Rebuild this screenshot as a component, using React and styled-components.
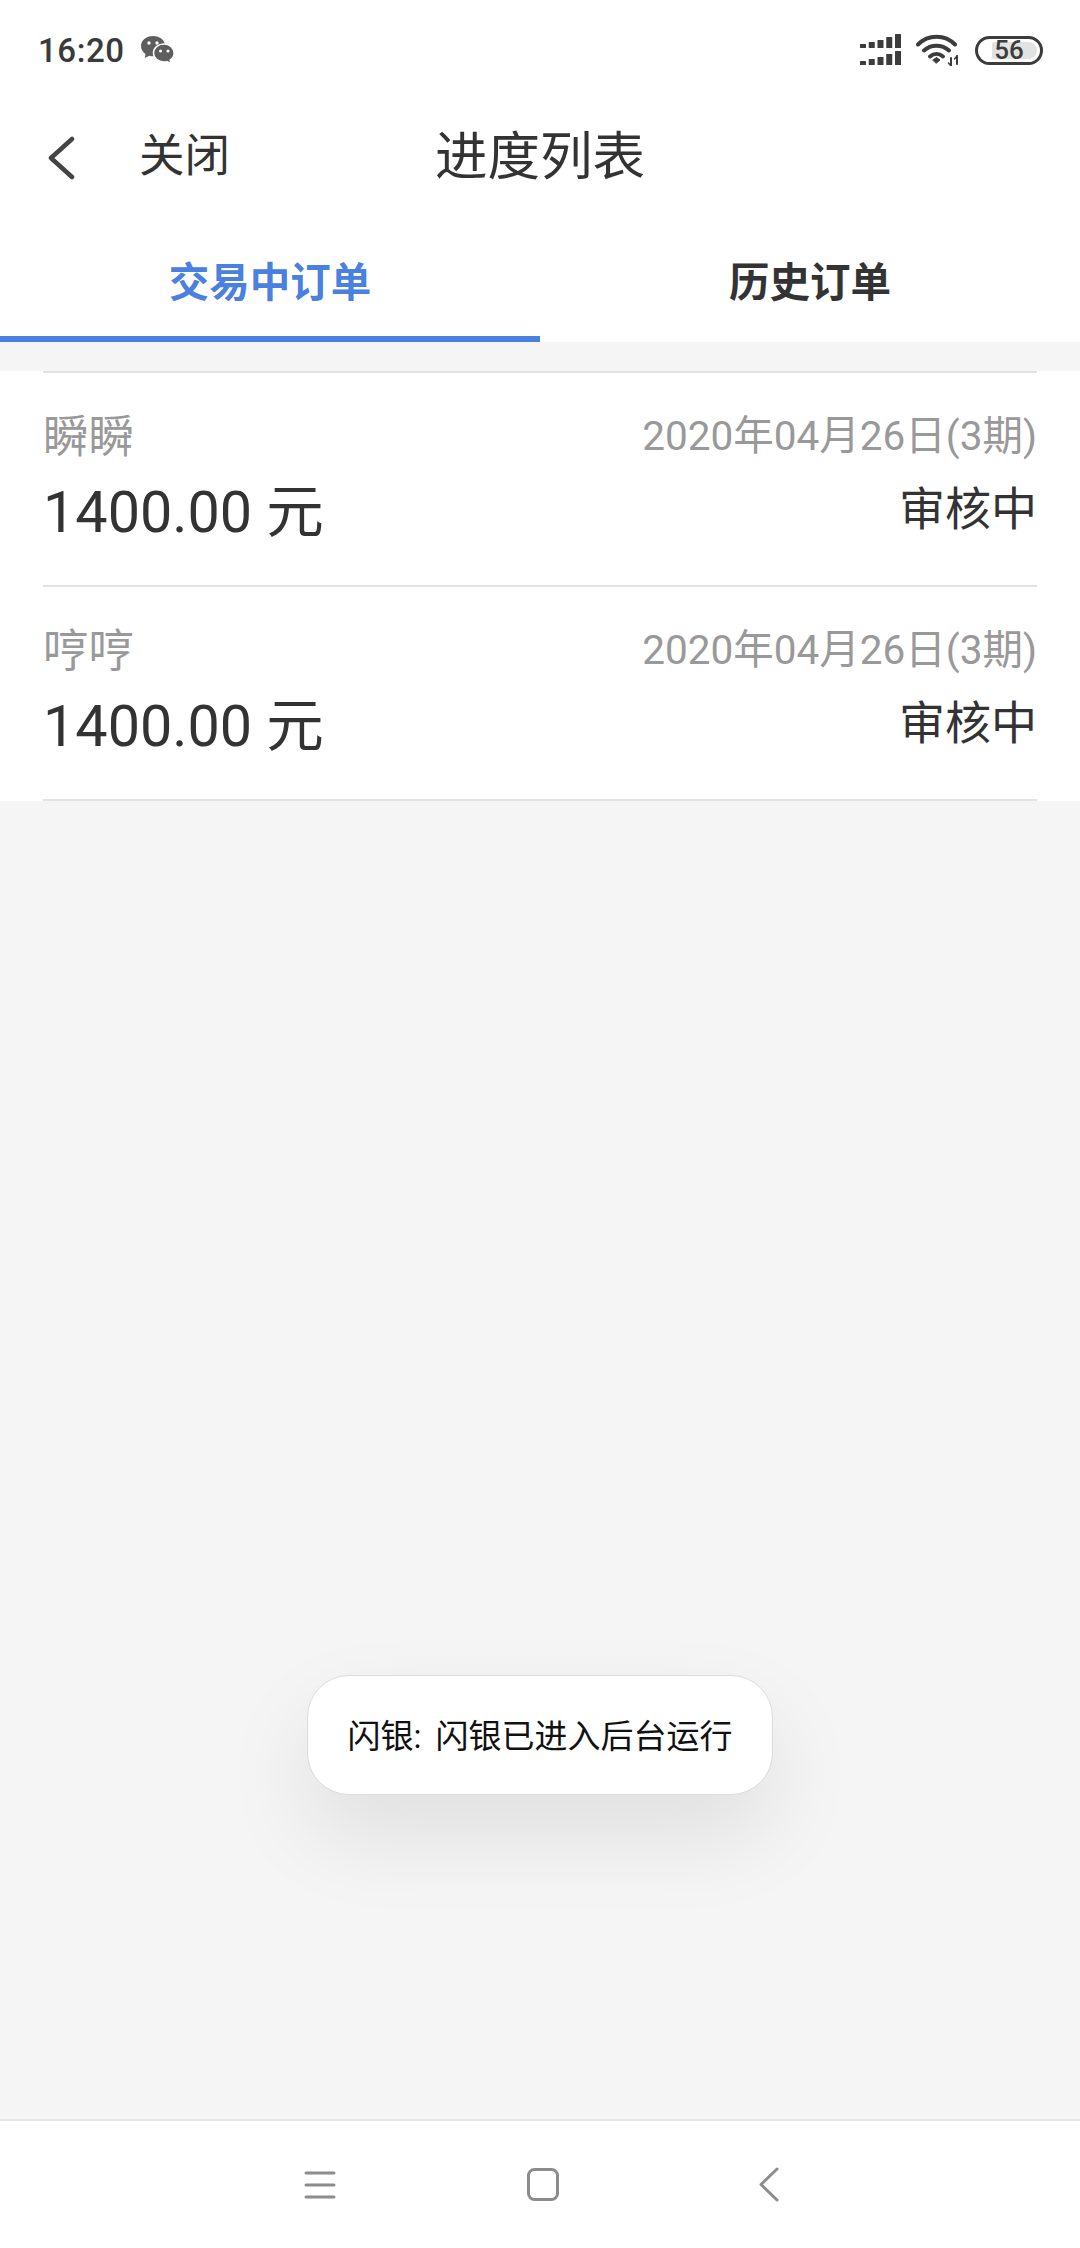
import styled, { createGlobalStyle } from 'styled-components';

const GlobalStyle = createGlobalStyle`
  html, body {
    margin: 0;
    padding: 0;
    background: #fff;
  }
  * {
    box-sizing: border-box;
  }
`;

const Page = styled.div`
  position: relative;
  width: 1080px;
  height: 2248px;
  display: flex;
  flex-direction: column;
  background: #f5f5f5;
  font-family: Roboto, "Noto Sans CJK SC", sans-serif;
  color: #333;
  overflow: hidden;
`;

const StatusBar = styled.div`
  height: 100px;
  padding: 0 37px 0 38px;
  display: flex;
  align-items: center;
  justify-content: space-between;
  background: #fff;
`;

const StatusLeft = styled.div`
  display: flex;
  align-items: center;
  gap: 15px;
`;

const Time = styled.span`
  font-size: 33px;
  font-weight: 500;
  color: #3a3a3a;
  letter-spacing: 0.6px;
`;

const StatusRight = styled.div`
  display: flex;
  align-items: center;
  gap: 15px;
`;

const Battery = styled.div`
  position: relative;
  width: 68px;
  height: 29px;
  border: 3.5px solid #3c3c3c;
  border-radius: 15px;
  display: flex;
  align-items: center;
  justify-content: center;
  font-size: 26px;
  font-weight: 500;
  color: #3c3c3c;
  overflow: hidden;
`;

const BatteryFill = styled.div`
  position: absolute;
  top: 3px;
  bottom: 3px;
  left: 14px;
  right: 3px;
  border-radius: 2px 9px 9px 2px;
  background: #e2e2e2;
`;

const BatteryText = styled.span`
  position: relative;
  line-height: 22px;
`;

const Header = styled.div`
  height: 116px;
  display: grid;
  grid-template-columns: 1fr auto 1fr;
  align-items: center;
  background: #fff;
`;

const HeaderLeft = styled.div`
  display: flex;
  align-items: center;
  gap: 63px;
  padding-left: 47px;
`;

const CloseText = styled.span`
  font-size: 45.500px;
  line-height: 64px;
  margin-top: -3px;
  color: #333;
`;

const Title = styled.span`
  font-size: 52.500px;
  line-height: 76px;
  margin-top: -3px;
  color: #333;
`;

const Tabs = styled.div`
  height: 126px;
  display: flex;
  background: #fff;
`;

const Tab = styled.div`
  flex: 1;
  padding-top: 38px;
  line-height: 58px;
  text-align: center;
  font-size: 40.500px;
  font-weight: 700;
  color: ${props => (props.$active ? '#4a80e0' : '#333')};
  border-bottom: 6px solid ${props => (props.$active ? '#4a80e0' : 'transparent')};
`;

const Main = styled.div`
  flex: 1;
  padding-top: 30px;
`;

const List = styled.div`
  padding: 0 43px;
  background: #fff;
`;

const Row = styled.div`
  height: 214px;
  padding-top: 30px;
  display: flex;
  justify-content: space-between;
  border-bottom: 2px solid #e2e2e2;
`;

const TopRule = styled.div`
  height: 2px;
  margin-top: -1px;
  background: #e2e2e2;
`;

const Col = styled.div`
  display: flex;
  flex-direction: column;
  align-items: ${props => (props.$right ? 'flex-end' : 'flex-start')};
`;

const Name = styled.div`
  font-size: 45.500px;
  line-height: 70px;
  color: #999;
`;

const Amount = styled.div`
  font-size: 57.500px;
  line-height: 80px;
  color: #333;
`;

const DateText = styled.div`
  font-size: 40.500px;
  line-height: 66px;
  color: #999;
`;

const Status = styled.div`
  font-size: 46px;
  line-height: 80px;
  color: #333;
`;

const Toast = styled.div`
  position: absolute;
  left: 307px;
  top: 1675px;
  width: 466px;
  height: 120px;
  padding-bottom: 3px;
  display: flex;
  align-items: center;
  justify-content: center;
  background: #fff;
  border: 1px solid #dcdcdc;
  border-radius: 42px;
  font-size: 33px;
  word-spacing: 6px;
  color: #111;
  box-shadow: 0 40px 90px rgba(0, 0, 0, 0.09);
`;

const NavBar = styled.div`
  height: 129px;
  padding-left: 6px;
  display: flex;
  align-items: center;
  justify-content: center;
  background: #fff;
  border-top: 2px solid #e6e6e6;
`;

const NavSlot = styled.div`
  width: 226px;
  display: flex;
  justify-content: center;
`;

const WeChatIcon = () => (
  <svg width="35" height="30" viewBox="0 0 35 30">
    <path d="M13 1C6 1 1 5.500 1 11c0 3.400 1.900 6 4.600 8l-.8 4 4.500-2.200c1.200.4 2.400.5 3.700.5 7 0 12-4.500 12-10.300S20 1 13 1z" fill="#5e5e5e" />
    <path d="M24 9c-6 0-10.500 4-10.500 9s4.500 9 10.500 9c1 0 2-.1 3-.4l3.800 2.400-.7-3.800c2.500-1.700 4-4.300 4-7.200 0-5-4.500-9-10.100-9z" fill="#5e5e5e" stroke="#fff" strokeWidth="1.500" />
    <circle cx="9" cy="8" r="1.700" fill="#fff" />
    <circle cx="17" cy="8" r="1.700" fill="#fff" />
    <circle cx="20.500" cy="16" r="1.500" fill="#fff" />
    <circle cx="28" cy="16" r="1.500" fill="#fff" />
  </svg>
);

const signalBars = [
  { x: 0, h: 4 },
  { x: 8.750, h: 6 },
  { x: 17.500, h: 8 },
  { x: 26.250, h: 11 },
  { x: 35, h: 14 },
];

const SignalIcon = () => (
  <svg width="41" height="32" viewBox="0 0 41 32" fill="#3c3c3c">
    {signalBars.map(({ x, h }) => (
      <g key={x}>
        <rect x={x} y={14 - h} width="6" height={h} rx="0.500" />
        <rect x={x} y={31 - h} width="6" height={h} rx="0.500" />
      </g>
    ))}
  </svg>
);

const WifiIcon = () => (
  <svg width="44" height="32" viewBox="0 0 44 32" fill="none" stroke="#3c3c3c" strokeLinecap="round">
    <path d="M2 10.500C12 0 29 0 39 10.500" strokeWidth="4" />
    <path d="M8 16.500C15 10 26 10 33 16.500" strokeWidth="4" />
    <path d="M14 22.500C18 19 23 19 27 22.500" strokeWidth="4" />
    <path d="M17 26l3.500-2.500L24 26l-3.500 3z" fill="#3c3c3c" strokeWidth="1" />
    <path d="M35 24v8M41 22v8" strokeWidth="2" />
    <path d="M32.500 29l2.500 3M38.500 25l2.500-3" strokeWidth="1.500" />
  </svg>
);

const BackIcon = () => (
  <svg width="29" height="44" viewBox="0 0 29 44" fill="none" stroke="#444" strokeWidth="4.500" strokeLinecap="round" strokeLinejoin="round">
    <path d="M25 3L4 22l21 19" />
  </svg>
);

const MenuIcon = () => (
  <svg width="38" height="28" viewBox="0 0 38 28" fill="none" stroke="#8c8c8c" strokeWidth="3" strokeLinecap="round">
    <path d="M8 2h28M8 14h28M8 26h28" />
  </svg>
);

const HomeIcon = () => (
  <svg width="32" height="33" viewBox="0 0 32 33" fill="none" stroke="#8c8c8c" strokeWidth="3">
    <rect x="1.500" y="1.500" width="29" height="30" rx="6" />
  </svg>
);

const NavBackIcon = () => (
  <svg width="20" height="35" viewBox="0 0 20 35" fill="none" stroke="#8c8c8c" strokeWidth="3" strokeLinecap="round" strokeLinejoin="round">
    <path d="M18 2L2 17.500 18 33" />
  </svg>
);

const orders = [
  { name: '瞬瞬', amount: '1400.00 元', date: '2020年04月26日(3期)', status: '审核中' },
  { name: '哼哼', amount: '1400.00 元', date: '2020年04月26日(3期)', status: '审核中' },
];

const App = () => (
  <Page>
    <GlobalStyle />
    <StatusBar>
      <StatusLeft>
        <Time>16:20</Time>
        <WeChatIcon />
      </StatusLeft>
      <StatusRight>
        <SignalIcon />
        <WifiIcon />
        <Battery>
          <BatteryFill />
          <BatteryText>56</BatteryText>
        </Battery>
      </StatusRight>
    </StatusBar>
    <Header>
      <HeaderLeft>
        <BackIcon />
        <CloseText>关闭</CloseText>
      </HeaderLeft>
      <Title>进度列表</Title>
      <div />
    </Header>
    <Tabs>
      <Tab $active>交易中订单</Tab>
      <Tab>历史订单</Tab>
    </Tabs>
    <Main>
      <List>
        <TopRule />
        {orders.map(order => (
          <Row key={order.name}>
            <Col>
              <Name>{order.name}</Name>
              <Amount>{order.amount}</Amount>
            </Col>
            <Col $right>
              <DateText>{order.date}</DateText>
              <Status>{order.status}</Status>
            </Col>
          </Row>
        ))}
      </List>
    </Main>
    <Toast>闪银: 闪银已进入后台运行</Toast>
    <NavBar>
      <NavSlot><MenuIcon /></NavSlot>
      <NavSlot><HomeIcon /></NavSlot>
      <NavSlot><NavBackIcon /></NavSlot>
    </NavBar>
  </Page>
);

export default App;
